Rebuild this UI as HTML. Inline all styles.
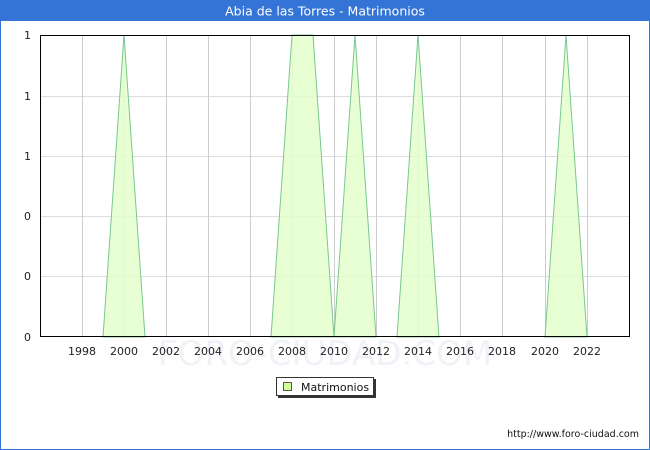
<!DOCTYPE html><html><head><style>body{margin:0;width:650px;height:450px;overflow:hidden;background:#fff;font-family:"DejaVu Sans","Liberation Sans",sans-serif}</style></head><body>
<svg width="650" height="450" xmlns="http://www.w3.org/2000/svg" style="position:absolute;left:0;top:0">
<rect x="0.5" y="0.5" width="649" height="449" fill="#fff" stroke="#3374d6"/>
<rect x="0" y="0" width="650" height="21" fill="#3374d6"/>
<text x="325" y="15.5" fill="#fff" font-size="12.5" text-anchor="middle" font-family="DejaVu Sans,sans-serif">Abia de las Torres - Matrimonios</text>
<g stroke="#ddd" stroke-width="1">
<line x1="40" y1="96.5" x2="630" y2="96.5"/><line x1="40" y1="156.5" x2="630" y2="156.5"/><line x1="40" y1="216.5" x2="630" y2="216.5"/><line x1="40" y1="276.5" x2="630" y2="276.5"/>
</g>
<g stroke="#ccc">
<line x1="82.5" y1="35" x2="82.5" y2="337"/><line x1="124.5" y1="35" x2="124.5" y2="337"/><line x1="166.5" y1="35" x2="166.5" y2="337"/><line x1="208.5" y1="35" x2="208.5" y2="337"/><line x1="250.5" y1="35" x2="250.5" y2="337"/><line x1="292.5" y1="35" x2="292.5" y2="337"/><line x1="334.5" y1="35" x2="334.5" y2="337"/><line x1="376.5" y1="35" x2="376.5" y2="337"/><line x1="418.5" y1="35" x2="418.5" y2="337"/><line x1="460.5" y1="35" x2="460.5" y2="337"/><line x1="502.5" y1="35" x2="502.5" y2="337"/><line x1="545.5" y1="35" x2="545.5" y2="337"/><line x1="587.5" y1="35" x2="587.5" y2="337"/>
</g>
<text x="325" y="365" font-size="34" fill="#f0f2f8" text-anchor="middle" font-family="DejaVu Sans,sans-serif">FORO-CIUDAD.COM</text>
<g fill="#e4ffcc" fill-opacity="0.85" stroke="#77c890" stroke-width="1">
<polygon points="103,337 124,35 145,337"/>
<polygon points="271,337 292,35 313,35 334,337"/>
<polygon points="334,337 355,35 376,337"/>
<polygon points="397,337 418,35 439,337"/>
<polygon points="545,337 566,35 587,337"/>
</g>
<rect x="40.5" y="35.5" width="589" height="301" fill="none" stroke="#000"/>
<g font-size="11" fill="#222" text-anchor="end" font-family="DejaVu Sans,sans-serif">
<text x="31" y="39">1</text><text x="31" y="100">1</text><text x="31" y="160">1</text><text x="31" y="220">0</text><text x="31" y="280">0</text><text x="31" y="341">0</text>
</g>
<g font-size="11" fill="#222" text-anchor="middle" font-family="DejaVu Sans,sans-serif">
<text x="82" y="355">1998</text><text x="124" y="355">2000</text><text x="166" y="355">2002</text><text x="208" y="355">2004</text><text x="250" y="355">2006</text><text x="292" y="355">2008</text><text x="334" y="355">2010</text><text x="376" y="355">2012</text><text x="418" y="355">2014</text><text x="460" y="355">2016</text><text x="502" y="355">2018</text><text x="545" y="355">2020</text><text x="587" y="355">2022</text>
</g>
<rect x="278" y="379" width="98" height="19" fill="#333"/>
<rect x="276.5" y="377.5" width="97" height="18" fill="#fff" stroke="#333"/>
<rect x="283.5" y="382.5" width="8" height="8" fill="#ccff99" stroke="#555"/>
<text x="301" y="391" font-size="11" fill="#111" font-family="DejaVu Sans,sans-serif">Matrimonios</text>
<text x="639" y="437" font-size="9.5" fill="#111" text-anchor="end" font-family="DejaVu Sans,sans-serif">http://www.foro-ciudad.com</text>
</svg></body></html>
